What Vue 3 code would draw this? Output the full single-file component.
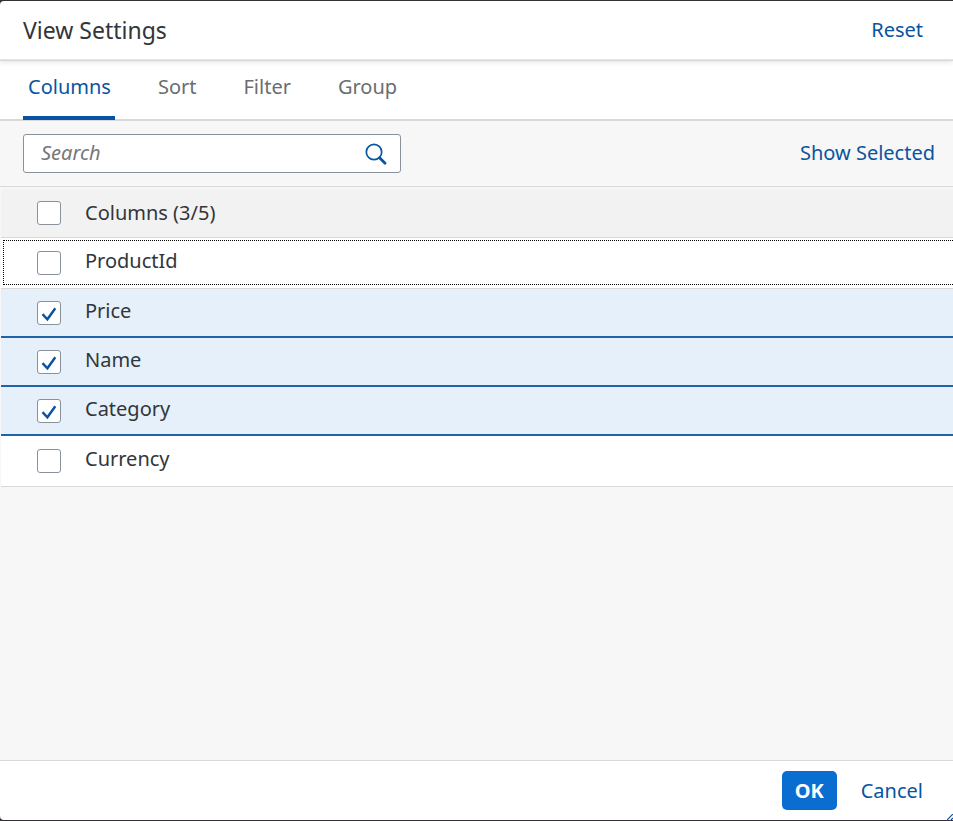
<script setup>
import { computed, ref } from 'vue'

const tabs = ['Columns', 'Sort', 'Filter', 'Group']
const activeTab = ref('Columns')
const query = ref('')
const focused = ref('ProductId')
const columns = ref([
  { name: 'ProductId', selected: false },
  { name: 'Price', selected: true },
  { name: 'Name', selected: true },
  { name: 'Category', selected: true },
  { name: 'Currency', selected: false },
])
const selectedCount = computed(() => columns.value.filter((c) => c.selected).length)
const allSelected = computed(() => selectedCount.value === columns.value.length)
const visible = computed(() =>
  columns.value.filter((c) => c.name.toLowerCase().includes(query.value.toLowerCase())),
)
function toggleAll(event) {
  columns.value.forEach((c) => (c.selected = event.target.checked))
}
</script>

<template>
  <div class="backdrop">
    <section class="dialog" role="dialog" aria-labelledby="dialog-title">
      <header class="bar">
        <h1 id="dialog-title" class="title">View Settings</h1>
        <button type="button" class="link reset">Reset</button>
      </header>

      <nav class="tabs" role="tablist">
        <button
          v-for="tab in tabs"
          :key="tab"
          type="button"
          role="tab"
          class="tab"
          :class="{ active: tab === activeTab }"
          :aria-selected="tab === activeTab"
          @click="activeTab = tab"
        >
          {{ tab }}
        </button>
      </nav>

      <main class="content">
        <div class="toolbar">
          <div class="search">
            <input v-model="query" class="field" type="text" placeholder="Search" aria-label="Search" />
            <button type="button" class="search-button" aria-label="Start search">
              <svg width="22" height="22" viewBox="0 0 22 22" aria-hidden="true">
                <circle cx="9" cy="9" r="7.7" fill="none" stroke="#0854a0" stroke-width="1.7" />
                <path d="M14.6 14.8 L20 20.2" stroke="#0854a0" stroke-width="2.8" stroke-linecap="round" />
              </svg>
            </button>
          </div>
          <button type="button" class="link show">Show Selected</button>
        </div>

        <div class="list">
          <div class="row head">
            <input id="all" type="checkbox" class="check" :checked="allSelected" @change="toggleAll" />
            <label for="all" class="label">Columns ({{ selectedCount }}/{{ columns.length }})</label>
          </div>
          <div
            v-for="column in visible"
            :key="column.name"
            class="row"
            :class="{ selected: column.selected, focused: column.name === focused }"
          >
            <input :id="column.name" v-model="column.selected" type="checkbox" class="check" />
            <label :for="column.name" class="label">{{ column.name }}</label>
          </div>
        </div>
      </main>

      <footer class="footer">
        <button type="button" class="ok">OK</button>
        <button type="button" class="link cancel">Cancel</button>
      </footer>
      <svg class="grip" width="6" height="6" viewBox="0 0 6 6" aria-hidden="true">
        <path d="M0 6 L6 0 M4 6 L6 4" stroke="#0854a0" stroke-width="1.2" />
      </svg>
    </section>
  </div>
</template>

<style>
body {
  margin: 0;
}
</style>

<style scoped>
.backdrop {
  box-sizing: border-box;
  min-height: 100vh;
  display: flex;
  padding: 1px 0;
  background: #343236;
  font-family: "Noto Sans", sans-serif;
  font-size: 20px;
  line-height: 28px;
  color: #32363a;
}
.dialog {
  position: relative;
  flex: 1;
  display: flex;
  flex-direction: column;
  border-radius: 4px 0 0 4px;
  overflow: hidden;
  background: #fff;
}
button {
  margin: 0;
  padding: 0;
  border: 0;
  background: none;
  font: inherit;
  cursor: pointer;
}
.bar {
  position: relative;
  display: flex;
  align-items: center;
  justify-content: space-between;
  height: 58px;
  padding: 0 30px 0 23px;
  border-bottom: 1px solid #e5e5e5;
  box-shadow: 0 1px 0 #d9d9d9, 0 2px 5px rgba(0, 0, 0, 0.12);
}
.title {
  margin: 0;
  font-size: 23px;
  line-height: 28px;
  font-weight: 400;
}
.link {
  color: #0854a0;
}
.tabs {
  display: flex;
  gap: 38px;
  height: 59px;
  padding: 0 23px;
  border-bottom: 2px solid #d9d9d9;
}
.tab {
  box-sizing: border-box;
  height: 60px;
  padding: 0 4px 2px 5px;
  border-bottom: 4px solid transparent;
  border-radius: 2px 2px 0 0;
  color: #6a6d70;
}
.tab.active {
  color: #0854a0;
  border-bottom-color: #0854a0;
}
.content {
  flex: 1;
  background: #f7f7f7;
}
.toolbar {
  display: flex;
  align-items: center;
  justify-content: space-between;
  height: 65px;
  padding: 0 18px 0 23px;
  border-bottom: 1px solid #d9d9d9;
}
.show {
  padding-bottom: 2px;
}
.search {
  box-sizing: border-box;
  display: flex;
  align-items: center;
  width: 378px;
  height: 39px;
  padding: 0 13px 0 17px;
  border: 1px solid #89919a;
  border-radius: 3px;
  background: #fff;
}
.field {
  flex: 1;
  min-width: 0;
  padding: 0 0 2px;
  border: 0;
  outline: 0;
  background: none;
  font: inherit;
  color: #32363a;
}
.field::placeholder {
  font-style: italic;
  color: #74777a;
  opacity: 1;
}
.search-button {
  display: flex;
}
.list {
  padding-left: 1px;
}
.row {
  box-sizing: border-box;
  position: relative;
  display: flex;
  align-items: center;
  gap: 24px;
  height: 51px;
  padding-left: 36px;
  border-bottom: 1px solid #d9d9d9;
  background: #fff;
}
.row.head {
  border-top: 2px solid #f7f7f7;
  background: #f2f2f2;
}
.row.selected {
  height: 49px;
  border-bottom: 2px solid #2263a8;
  background: #e5f0fa;
}
.row.focused::after {
  content: "";
  position: absolute;
  inset: 2px 0 3px 2px;
  border: 1px dotted #000;
  border-right: 0;
  pointer-events: none;
}
.label {
  padding-bottom: 4px;
}
.head .label {
  padding-bottom: 0;
}
.check {
  appearance: none;
  flex: none;
  box-sizing: border-box;
  width: 24px;
  height: 24px;
  margin: 0;
  border: 1px solid #89919a;
  border-radius: 3px;
  background: #fff;
}
.check:checked {
  background-image: url("data:image/svg+xml,%3Csvg xmlns='http://www.w3.org/2000/svg' viewBox='0 0 22 22'%3E%3Cpath d='M4.5 12.2 L9.4 17.3 L17.3 6.2' fill='none' stroke='%230854a0' stroke-width='2.4'/%3E%3C/svg%3E");
}
.footer {
  display: flex;
  align-items: center;
  justify-content: flex-end;
  gap: 24px;
  height: 59px;
  padding-right: 30px;
  border-top: 1px solid #d9d9d9;
}
.ok {
  height: 39px;
  padding: 0 13px;
  border-radius: 5px;
  background: #0a6ed1;
  color: #fff;
  font-weight: 700;
}
.grip {
  position: absolute;
  right: 0;
  bottom: 0;
}
</style>
